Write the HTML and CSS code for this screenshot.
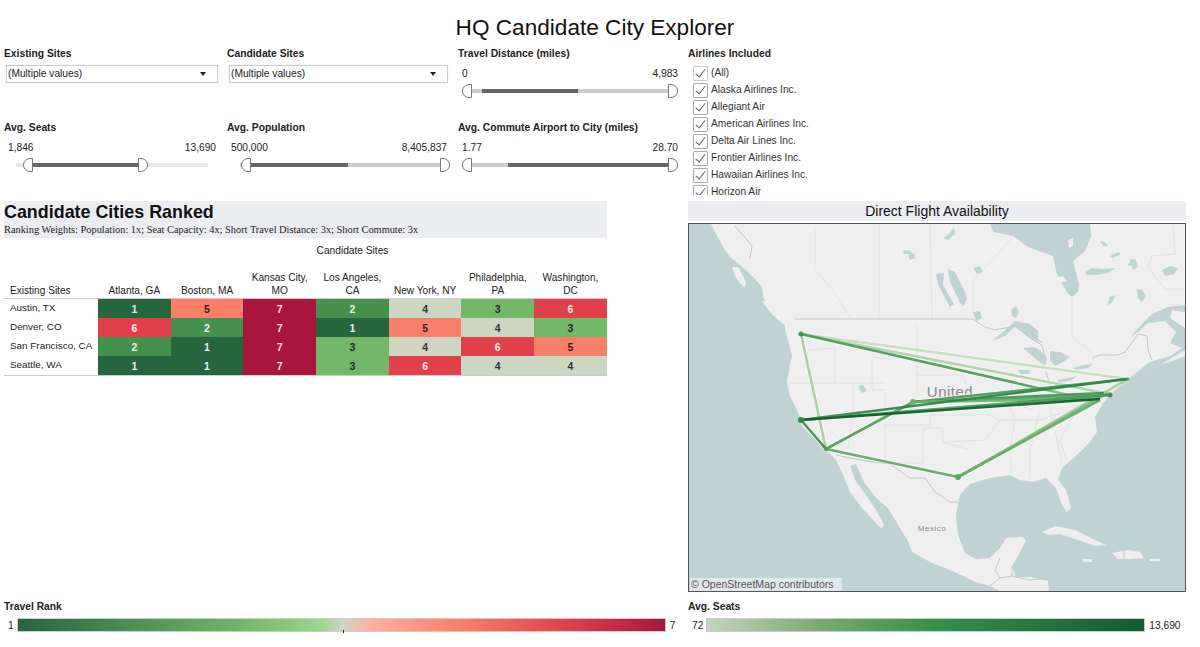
FILE: index.html
```html
<!DOCTYPE html>
<html lang="en">

<head>
    <meta charset="UTF-8">
    <title>HQ Candidate City Explorer</title>
    <link rel="stylesheet" href="styles.css">
</head>

<body>
    <h1 class="title">HQ Candidate City Explorer</h1>

    <div class="filters">
        <div class="filter">
            <div class="filter-title">Existing Sites</div>
            <div class="select"><span>(Multiple values)</span><i class="caret"></i></div>
        </div>
        <div class="filter">
            <div class="filter-title">Candidate Sites</div>
            <div class="select select-wide"><span>(Multiple values)</span><i class="caret"></i></div>
        </div>
        <div class="filter">
            <div class="filter-title">Travel Distance (miles)</div>
            <div class="range-values"><span>0</span><span>4,983</span></div>
            <div class="slider">
                <div class="fill" style="left: 20px; width: 96px"></div>
                <i class="knob knob-l" style="left: 0"></i>
                <i class="knob knob-r" style="left: 206px"></i>
            </div>
        </div>
        <div class="filter airlines">
            <div class="filter-title">Airlines Included</div>
            <ul class="checks">
                <li class="all">(All)</li>
                <li>Alaska Airlines Inc.</li>
                <li>Allegiant Air</li>
                <li>American Airlines Inc.</li>
                <li>Delta Air Lines Inc.</li>
                <li>Frontier Airlines Inc.</li>
                <li>Hawaiian Airlines Inc.</li>
                <li>Horizon Air</li>
            </ul>
        </div>
        <div class="filter">
            <div class="filter-title">Avg. Seats</div>
            <div class="range-values range-short"><span>1,846</span><span>13,690</span></div>
            <div class="slider slider-seats">
                <div class="fill" style="left: 17px; width: 107px"></div>
                <i class="knob knob-l" style="left: 7px"></i>
                <i class="knob knob-r" style="left: 122px"></i>
            </div>
        </div>
        <div class="filter">
            <div class="filter-title">Avg. Population</div>
            <div class="range-values"><span>500,000</span><span>8,405,837</span></div>
            <div class="slider slider-pop">
                <div class="fill" style="left: 10px; width: 98px"></div>
                <i class="knob knob-l" style="left: 1px"></i>
                <i class="knob knob-r" style="left: 200px"></i>
            </div>
        </div>
        <div class="filter">
            <div class="filter-title">Avg. Commute Airport to City (miles)</div>
            <div class="range-values"><span>1.77</span><span>28.70</span></div>
            <div class="slider">
                <div class="fill" style="left: 46px; width: 160px"></div>
                <i class="knob knob-l" style="left: 0"></i>
                <i class="knob knob-r" style="left: 206px"></i>
            </div>
        </div>
    </div>

    <div class="main">
        <div class="ranked">
            <div class="ranked-head">
                <h2>Candidate Cities Ranked</h2>
                <p>Ranking Weights: Population: 1x; Seat Capacity: 4x; Short Travel Distance: 3x; Short Commute: 3x</p>
            </div>
            <div class="axis-title">Candidate Sites</div>
            <div class="heat">
                <div class="col-head first">Existing Sites</div>
                <div class="col-head">Atlanta, GA</div>
                <div class="col-head">Boston, MA</div>
                <div class="col-head">Kansas City,<br>MO</div>
                <div class="col-head">Los Angeles,<br>CA</div>
                <div class="col-head">New York, NY</div>
                <div class="col-head">Philadelphia,<br>PA</div>
                <div class="col-head">Washington,<br>DC</div>

                <div class="row-head">Austin, TX</div>
                <div class="cell r1">1</div><div class="cell r5">5</div><div class="cell r7">7</div><div class="cell r2">2</div><div class="cell r4">4</div><div class="cell r3">3</div><div class="cell r6">6</div>

                <div class="row-head">Denver, CO</div>
                <div class="cell r6">6</div><div class="cell r2">2</div><div class="cell r7">7</div><div class="cell r1">1</div><div class="cell r5">5</div><div class="cell r4">4</div><div class="cell r3">3</div>

                <div class="row-head">San Francisco, CA</div>
                <div class="cell r2">2</div><div class="cell r1">1</div><div class="cell r7">7</div><div class="cell r3">3</div><div class="cell r4">4</div><div class="cell r6">6</div><div class="cell r5">5</div>

                <div class="row-head">Seattle, WA</div>
                <div class="cell r1">1</div><div class="cell r1">1</div><div class="cell r7">7</div><div class="cell r3">3</div><div class="cell r6">6</div><div class="cell r4">4</div><div class="cell r4">4</div>
            </div>
        </div>

        <div class="flights">
            <div class="flights-head">Direct Flight Availability</div>
            <div class="map">
                <svg viewBox="689 224 496 367" width="496" height="367">
                    <defs>
                        <linearGradient id="fade" gradientUnits="userSpaceOnUse" x1="801" y1="334" x2="1095" y2="401">
                            <stop offset="0" stop-color="#4a9a52"/>
                            <stop offset="0.75" stop-color="#4a9a52"/>
                            <stop offset="0.9" stop-color="#8fbf88"/>
                        </linearGradient>
                    </defs>
                    <rect x="689" y="224" width="496" height="367" fill="#c0d3d3"/>
                    <g class="base">
                        <!-- mainland -->
                        <path fill="#efeff0" d="M711 224L716 234 720 241 725 250 730 257 739 264 747 271 755 279 762 287 763 296 765 302 777 309 781 316 785 324 785 330 788 340 790 347 792 356 789 370 787 382 790 396 796 408 800 417 802 426 812 436 822 446 827 451 836 460 843 475 850 492 862 508 872 519 881 528 884 525 876 510 866 495 855 480 850 466 856 464 864 482 876 498 888 508 900 528 908 541 912 552 930 562 950 570 963 576 975 582 990 586 1000 591 1049 591 1048 581 1030 577 1016 577 1012 566 1018 556 1026 540 1022 537 1006 538 1000 548 990 558 975 559 965 553 958 535 956 515 960 495 970 484 990 478 1010 475 1020 480 1033 482 1046 478 1056 488 1062 505 1067 512 1071 508 1066 490 1058 480 1062 468 1077 455 1090 442 1097 432 1095 417 1103 403 1113 392 1128 379 1140 372 1155 366 1170 362 1185 356 1185 224Z"/>
                        <!-- islands -->
                        <path fill="#efeff0" d="M732 267L738 267 742 274 746 282 745 288 739 282 735 276ZM762 301L770 302 778 308 788 316 792 324 786 326 778 320 770 312ZM1042 532L1055 526 1075 530 1095 540 1106 545 1095 546 1078 540 1060 534 1048 535ZM1112 553L1128 550 1140 552 1144 558 1130 559 1118 559ZM1082 559L1092 559 1092 562 1084 562ZM1150 559L1160 559 1160 561 1150 561Z"/>
                        <!-- hudson bay -->
                        <path class="water" d="M990 224L993 232 1013 236 1028 247 1053 256 1055 266 1057 274 1062 284 1067 292 1072 297 1078 292 1079 284 1077 277 1073 261 1085 251 1091 237 1090 224Z"/>
                        <path fill="#efeff0" d="M1068 240L1073 238 1073 246 1069 248ZM1057 277L1063 276 1067 282 1060 282Z"/>
                        <!-- prairie lakes -->
                        <path class="water" d="M948 269L955 272 960 282 965 292 967 298 964 306 960 303 955 292 950 282ZM936 274L944 273 943 285 948 294 954 304 950 307 944 296 938 284ZM943 238L950 233 954 227 955 234 948 240ZM973 268L980 266 983 272 977 274ZM973 312L980 311 982 318 976 321ZM903 250L911 251 912 254 904 254ZM908 255L914 253 915 258 910 260ZM1011 310L1016 306 1019 312 1016 318 1012 316Z"/>
                        <!-- great lakes -->
                        <path class="water" d="M992 341L1003 332 1015 321 1030 324 1038 331 1038 339 1045 344 1030 338 1015 327 1005 336ZM1023 348L1034 347 1040 350 1047 358 1045 366 1038 361 1030 354ZM1050 351L1060 352 1070 357 1063 362 1055 366 1050 360ZM1018 370L1030 370 1029 374 1020 374ZM1057 380L1068 378 1077 376 1072 380 1060 383ZM1073 368L1084 365 1093 364 1088 368 1077 370Z"/>
                        <!-- quebec lakes -->
                        <path class="water" d="M1100 241L1105 242 1108 246 1103 246ZM1110 256L1118 252 1121 254 1113 258ZM1085 272L1092 268 1102 269 1115 268 1108 273 1095 275 1087 275ZM1130 260L1135 259 1138 266 1134 270 1130 264ZM1137 289L1142 290 1146 296 1142 302 1138 298ZM1107 306L1110 297 1116 295 1112 302ZM1162 270L1170 266 1178 268 1174 274 1165 276ZM1128 264L1134 262 1134 264 1128 266Z"/>
                        <!-- gulf of st lawrence -->
                        <path class="water" d="M1130 337L1140 326 1152 314 1168 307 1185 305 1185 312 1172 310 1170 318 1185 328 1185 349 1170 343 1176 332 1165 321 1148 323 1138 332ZM1128 379L1150 362 1170 356 1185 346 1185 350 1160 365 1140 372Z"/>
                        <path class="water" d="M858 386L863 385 867 391 862 393Z"/>
                        <!-- state and province lines -->
                        <g class="states">
                            <path d="M815 226V269L833 291 850 317M879 224V319M930 224L932 319M1173 226L1175 254 1152 256 1148 267 1165 289 1185 289"/>
                            <path d="M973 317V281L1013 237M1072 296V337L1092 352"/>
                            <path d="M808 350L835 348M835 348V382M790 383H885M853 383V413M872 358V390H885M872 358H917M917 325V390M917 375H963M885 392V463M885 425H930M930 415V425M923 428V463M885 463H923M923 428H942L943 442 970 450M823 422L848 448M853 413L848 448"/>
                            <path d="M930 415H990L1000 420 1040 420 1070 410 1085 400M963 375L968 390 965 402 1010 408 1015 420 1010 450 1012 475M1012 372V400L1030 410 1040 400 1045 380M1040 410L1030 450 1030 478M1050 385V408L1055 430 1062 465M1078 408L1060 440 1066 458M942 442L985 440 1000 420"/>
                        </g>
                        <path class="border" d="M795 319H973L977 322 985 327 995 330 1015 326 1030 338 1042 345 1046 360M1046 372L1050 385M1092 358L1100 355 1118 355 1125 352 1138 334 1147 336 1148 350 1152 360"/>
                        <path class="border" d="M735 226L752 246 750 259"/>
                        <path class="border" d="M836 455L850 458 872 462 890 464 910 478 925 478 935 492 950 502 958 502"/>
                        <path class="border" d="M1000 558L995 570 1000 578 1012 576 1012 566M1000 578L990 586M1012 576L1030 580 1049 578M1124 550V562"/>
                    </g>
                    <text class="map-label" x="950" y="397" font-size="15" text-anchor="middle">United</text>
                    <text class="map-label" x="932" y="531" font-size="8" text-anchor="middle">Mexico</text>
                    <!-- routes -->
                    <g class="halo">
                        <path d="M801 334L1128 379M801 334L1110 394M801 334L1095 401M801 334L826 449M801 420L1110 395M801 420L1100 399M801 420L1128 379M801 420L826 449M826 449L913 402M826 449L958 477M913 402L1128 379M913 402L1110 395M913 402L1100 399M958 477L1128 379M958 477L1108 393M958 477L1100 400"/>
                    </g>
                    <g class="routes">
                        <path stroke="#c4dbbd" d="M801 334L1128 379"/>
                        <path stroke="#acd0a5" d="M801 334L1110 394"/>
                        <path stroke="url(#fade)" d="M801 334L1095 401"/>
                        <path stroke="#abc9a3" d="M801 334L826 449"/>
                        <path stroke="#a5cc9d" d="M958 477L1128 379"/>
                        <path stroke="#7db878" d="M958 477L1108 393"/>
                        <path stroke="#69aa66" d="M958 477L1100 400"/>
                        <path stroke="#5ea562" d="M826 449L958 477"/>
                        <path stroke="#4b9c57" d="M826 449L913 402"/>
                        <path stroke="#3b8f4a" d="M801 420L826 449"/>
                        <path stroke="#46964f" d="M913 402L1128 379"/>
                        <path stroke="#3d9350" d="M913 402L1104 393"/>
                        <path stroke="#55a25c" d="M913 402L1110 395"/>
                        <path stroke="#6ab06a" d="M913 402L1100 399"/>
                        <path stroke="#2a8443" d="M801 420L1128 379"/>
                        <path stroke="#479a52" d="M801 420L1110 395"/>
                        <path stroke="#0b5e2b" d="M801 420L1100 399"/>
                    </g>
                    <g class="nodes">
                        <circle cx="801" cy="334" r="2.5" fill="#3f9150"/>
                        <circle cx="801" cy="420" r="3" fill="#2f8a47"/>
                        <circle cx="826" cy="449" r="2" fill="#4b9c57"/>
                        <circle cx="913" cy="402" r="3" fill="#72b06e"/>
                        <circle cx="958" cy="477" r="3" fill="#5ea562"/>
                        <circle cx="1128" cy="379" r="1.5" fill="#5ea562"/>
                        <circle cx="1110" cy="395" r="2.5" fill="#3e9150"/>
                    </g>
                </svg>
                <div class="attribution">© OpenStreetMap contributors</div>
            </div>
        </div>
    </div>

    <div class="legends">
        <div class="legend">
            <div class="filter-title">Travel Rank</div>
            <div class="legend-row">
                <span class="legend-min">1</span>
                <div class="ramp ramp-rank"><i class="tick"></i></div>
                <span>7</span>
            </div>
        </div>
        <div class="legend">
            <div class="filter-title">Avg. Seats</div>
            <div class="legend-row">
                <span class="legend-min">72</span>
                <div class="ramp ramp-seats"></div>
                <span>13,690</span>
            </div>
        </div>
    </div>
</body>

</html>
```

FILE: styles.css
```css
* {
    margin: 0;
    padding: 0;
    box-sizing: border-box;
}

body {
    width: 1200px;
    height: 647px;
    overflow: hidden;
    background: #fff;
    color: #222;
    font-family: "Liberation Sans", Arial, sans-serif;
    font-size: 10.2px;
}

.title {
    height: 47px;
    padding-top: 14px;
    padding-right: 10px;
    text-align: center;
    font-size: 22.6px;
    line-height: 28px;
    font-weight: normal;
    color: #111;
}

/* filter strip */
.filters {
    display: grid;
    grid-template-columns: 223px 231px 230px 498px;
    grid-template-rows: 74px 74px;
    padding-left: 4px;
}

.filter-title {
    font-weight: bold;
    font-size: 10.3px;
    line-height: 13px;
    color: #222;
}

.select {
    display: flex;
    justify-content: space-between;
    align-items: center;
    width: 212px;
    height: 18px;
    margin: 5px 0 0 2px;
    padding: 0 11px 2px 1px;
    border: 1px solid #ccc;
    box-shadow: 0 0 1px #ddd;
}

.select-wide {
    width: 219px;
}

.caret {
    width: 0;
    height: 0;
    margin-top: 2px;
    border-left: 3px solid transparent;
    border-right: 3px solid transparent;
    border-top: 4px solid #222;
}

.range-values {
    display: flex;
    justify-content: space-between;
    width: 220px;
    margin-top: 7px;
    padding: 0 0 0 4px;
    line-height: 13px;
}

.range-short {
    width: 212px;
}

.slider {
    position: relative;
    width: 216px;
    height: 4px;
    margin: 9px 0 0 4px;
    background: #ccc;
}

.slider-seats {
    width: 192px;
    margin-left: 12px;
    background: #e8e8e8;
}

.slider-pop {
    width: 209px;
    margin-left: 13px;
}

.fill {
    position: absolute;
    top: 0;
    height: 4px;
    background: #666;
}

.knob {
    position: absolute;
    top: -5px;
    width: 10px;
    height: 14px;
    background: #fff;
    border: 1px solid #777;
}

.knob-l {
    border-radius: 7px 0 0 7px;
}

.knob-r {
    border-radius: 0 7px 7px 0;
}

.airlines {
    grid-row: 1 / 3;
    grid-column: 4;
    height: 148px;
    overflow: hidden;
}

.checks {
    list-style: none;
    margin: 4px 0 0 5px;
}

.checks li {
    position: relative;
    height: 17px;
    padding-left: 18px;
    line-height: 18px;
    color: #333;
}

.checks li::before {
    content: "";
    position: absolute;
    left: 0;
    top: 2px;
    width: 13px;
    height: 13px;
    border: 1px solid #aaa;
    border-radius: 1px;
}

.checks li::after {
    content: "";
    position: absolute;
    left: 5px;
    top: 3px;
    width: 4px;
    height: 9px;
    border-right: 1px solid #666;
    border-bottom: 1px solid #666;
    transform: rotate(38deg);
}

.checks li.all::before {
    border-color: #ccc;
}

/* lower area */
.main {
    display: grid;
    grid-template-columns: 603px 498px;
    column-gap: 81px;
    height: 399px;
    margin-top: 6px;
    padding-left: 4px;
}

.ranked-head {
    height: 37px;
    background: #ecedf1;
}

.ranked-head h2 {
    font-size: 17.9px;
    line-height: 23px;
    color: #111;
}

.ranked-head p {
    margin-top: -1px;
    font-family: "Liberation Serif", "Times New Roman", serif;
    font-size: 10.35px;
    line-height: 13px;
    color: #222;
}

.axis-title {
    padding: 6px 0 0 0;
    margin-left: 94px;
    height: 33px;
    text-align: center;
    line-height: 13px;
}

.heat {
    display: grid;
    grid-template-columns: 94px repeat(7, 72.7px);
    grid-template-rows: 28px repeat(4, 19px);
    border-bottom: 1px solid #ccc;
}

.col-head {
    display: flex;
    align-items: flex-end;
    justify-content: center;
    text-align: center;
    font-size: 10.1px;
    line-height: 13px;
    border-bottom: 1px solid #ccc;
    padding-bottom: 1px;
}

.col-head.first {
    justify-content: flex-start;
    padding-left: 6px;
}

.row-head {
    padding-left: 6px;
    font-size: 9.9px;
    line-height: 17px;
    white-space: nowrap;
}

.cell {
    display: flex;
    align-items: center;
    justify-content: center;
    font-size: 10.5px;
    font-weight: bold;
}

.r1 { background: #25663d; color: #e8f0ea; }
.r2 { background: #46904f; color: #eef5ee; }
.r3 { background: #72b868; color: #1c2c1c; }
.r4 { background: #cdd6c3; color: #333; }
.r5 { background: #f98068; color: #3a1a14; }
.r6 { background: #e1404a; color: #fdecec; }
.r7 { background: #a9163c; color: #f8e6ea; }

.flights-head {
    height: 20px;
    background: #ecedf1;
    text-align: center;
    font-size: 14px;
    line-height: 20px;
    color: #111;
}

.map {
    position: relative;
    width: 498px;
    height: 369px;
    margin-top: 2px;
    border: 1px solid #555;
}

.map svg {
    display: block;
}

.base {
    filter: blur(0.4px);
}

.water {
    fill: #c0d3d3;
}

.states path {
    fill: none;
    stroke: #dfdfdf;
    stroke-width: 0.8;
}

.border {
    fill: none;
    stroke: #c6c6c6;
    stroke-width: 1;
}

.map-label {
    fill: #8a8a8a;
    font-family: "Liberation Sans", Arial, sans-serif;
    letter-spacing: 0.5px;
}

.halo path {
    fill: none;
    stroke: #fff;
    stroke-opacity: 0.45;
    stroke-width: 4.5;
}

.routes path {
    fill: none;
    stroke-width: 2.6;
    stroke-opacity: 0.92;
}

.attribution {
    position: absolute;
    left: 1px;
    bottom: 0;
    padding: 0 0 0 1px;
    width: 152px;
    height: 13px;
    background: rgba(255, 255, 255, 0.5);
    font-size: 10.5px;
    line-height: 13px;
    white-space: nowrap;
    color: #555;
}

/* colour legends */
.legends {
    display: grid;
    grid-template-columns: 684px 498px;
    padding-left: 4px;
}

.legend-row {
    display: flex;
    align-items: center;
    margin-top: 5px;
    gap: 4px;
}

.legend-min {
    min-width: 9px;
    padding-left: 4px;
}

.ramp {
    position: relative;
    height: 14px;
    margin-left: -1px;
    border: 1px solid #ccc;
}

.ramp-rank {
    width: 649px;
    background: linear-gradient(to right, #25663d, #72b868 35%, #9cd78c 47%, #cdd6c3 50%, #ffb2a4 54%, #f98068 68%, #e1404a 85%, #a9163c);
}

.ramp-seats {
    width: 439px;
    background: linear-gradient(to right, #c3d6bb, #7aab72 25%, #33924a 52%, #0f5e2f);
}

.tick {
    position: absolute;
    left: 325px;
    bottom: -2px;
    width: 1px;
    height: 3px;
    background: #222;
}
```
